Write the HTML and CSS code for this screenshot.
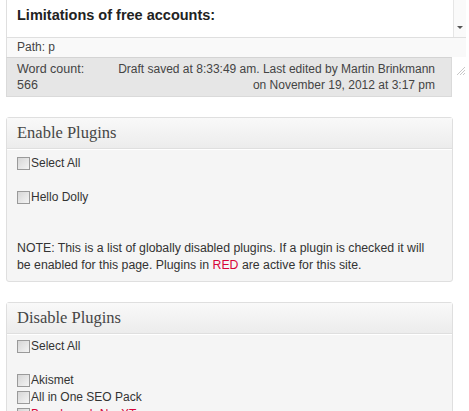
FILE: index.html
```html
<!DOCTYPE html>
<html>
<head>
<meta charset="utf-8">
<link rel="stylesheet" href="styles.css">
</head>
<body>
<div class="page">
  <div class="editor">
    <div class="editor-main">
      <div class="content"><p class="lead">Limitations of free accounts:</p></div>
      <div class="scroll"><span class="arrow"></span></div>
    </div>
    <div class="path">Path: p</div>
  </div>
  <div class="status-row">
    <div class="status">
      <div class="wc">Word count:<br>566</div>
      <div class="draft">Draft saved at 8:33:49 am. Last edited by Martin Brinkmann<br>on November 19, 2012 at 3:17 pm</div>
    </div>
    <div class="grip">
      <svg width="11" height="11" viewBox="0 0 11 11"><path d="M10 2 L2 10 M10 5 L5 10 M10 8 L8 10" stroke="#c8c8c8" stroke-width="1"/></svg>
    </div>
  </div>

  <div class="postbox">
    <h3 class="hndle">Enable Plugins</h3>
    <div class="inside">
      <div class="row"><span class="cb"></span>Select All</div>
      <div class="row blank"></div>
      <div class="row"><span class="cb"></span>Hello Dolly</div>
      <div class="row blank"></div>
      <div class="row blank"></div>
      <p class="note">NOTE: This is a list of globally disabled plugins. If a plugin is checked it will be enabled for this page. Plugins in <span class="red">RED</span> are active for this site.</p>
    </div>
  </div>

  <div class="postbox">
    <h3 class="hndle">Disable Plugins</h3>
    <div class="inside tight">
      <div class="row"><span class="cb"></span>Select All</div>
      <div class="row blank"></div>
      <div class="row"><span class="cb"></span>Akismet</div>
      <div class="row"><span class="cb"></span>All in One SEO Pack</div>
      <div class="row red"><span class="cb"></span>Breadcrumb NavXT</div>
    </div>
  </div>
</div>
</body>
</html>
```

FILE: styles.css
```css
html, body {
  margin: 0;
  padding: 0;
  background: #ffffff;
}
body {
  font-family: "Liberation Sans", Arial, sans-serif;
  font-size: 12px;
  color: #333333;
}
.page {
  padding-left: 6px;
  width: 460px;
}
.editor {
  width: 460px;
}
.editor-main {
  display: flex;
  height: 37px;
}
.content {
  border-left: 1px solid #dfdfdf;
  background: #fff;
  padding-left: 10px;
  box-sizing: border-box;
  width: 447px;
}
.lead {
  margin: 7px 0 0;
  font-weight: bold;
  font-size: 14.5px;
  color: #222;
  line-height: 17px;
}
.scroll {
  width: 13px;
  border-left: 1px solid #e6e6e6;
  background: #fafafa;
  display: flex;
  justify-content: center;
  align-items: flex-end;
  padding-bottom: 8px;
  box-sizing: border-box;
}
.arrow {
  width: 0;
  height: 0;
  border-left: 3px solid transparent;
  border-right: 3px solid transparent;
  border-top: 3px solid #555;
}
.path {
  height: 19px;
  line-height: 19px;
  border-top: 1px solid #dfdfdf;
  border-left: 1px solid #dfdfdf;
  background: #f9f9f9;
  padding-left: 10px;
  color: #444;
}
.status-row {
  display: flex;
  align-items: flex-start;
}
.status {
  width: 447px;
  box-sizing: border-box;
  display: flex;
  justify-content: space-between;
  background: #e6e6e6;
  border: 1px solid #dadada;
  border-top-color: #d4d4d4;
  padding: 3px 16px 3px 10px;
  line-height: 16px;
  font-size: 12px;
  color: #444;
}
.wc {
  font-size: 12.5px;
}
.draft {
  text-align: right;
}
.grip {
  padding: 8px 0 0 3px;
}
.postbox {
  margin-top: 20px;
  width: 447px;
  box-sizing: border-box;
  border: 1px solid #dfdfdf;
  border-radius: 3px;
  background: #f5f5f5;
}
.hndle {
  margin: 0;
  height: 30px;
  line-height: 30px;
  padding-left: 10px;
  font-family: "Liberation Serif", Georgia, serif;
  font-weight: normal;
  font-size: 16.5px;
  color: #464646;
  background: linear-gradient(#f9f9f9, #ececec);
  border-bottom: 1px solid #dfdfdf;
  box-shadow: 0 1px 0 #fff;
}
.inside {
  padding: 6px 20px 7px 10px;
}
.inside.tight {
  padding-top: 4px;
}
.row {
  height: 17px;
  line-height: 17px;
  display: flex;
  align-items: center;
}
.cb {
  width: 11px;
  height: 11px;
  border: 1px solid #9a9a9a;
  background: linear-gradient(135deg, #d6d6d6, #f4f4f4);
  margin-right: 1px;
  flex: none;
}
.note {
  margin: 0;
  line-height: 17px;
  font-size: 12.3px;
}
.red {
  color: #d8053a;
}
```
